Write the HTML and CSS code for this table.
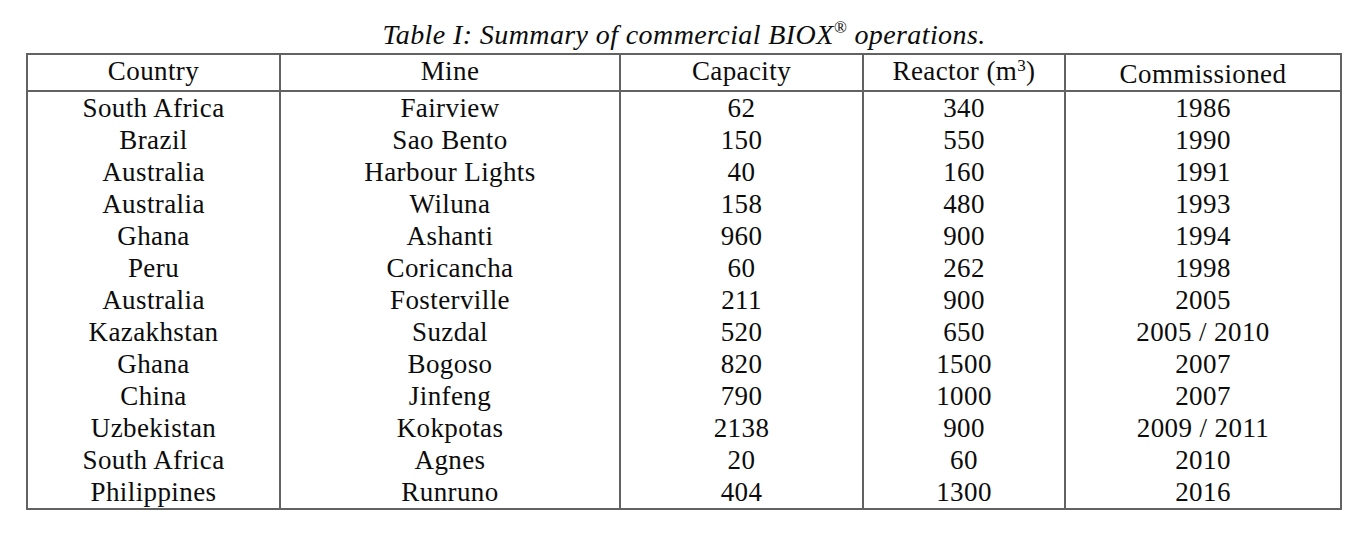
FILE: index.html
```html
<!DOCTYPE html>
<html lang="en">
<head>
<meta charset="utf-8">
<title>Summary of commercial BIOX operations</title>
<link rel="stylesheet" href="styles.css">
</head>
<body>
<table class="biox">
  <caption class="biox-caption">Table I: Summary of commercial BIOX<sup class="reg">®</sup> operations.</caption>
  <colgroup>
    <col class="c-country">
    <col class="c-mine">
    <col class="c-capacity">
    <col class="c-reactor">
    <col class="c-year">
  </colgroup>
  <thead>
    <tr class="head-row">
      <th>Country</th>
      <th>Mine</th>
      <th>Capacity</th>
      <th>Reactor (m<sup class="sup3">3</sup>)</th>
      <th class="th-low">Commissioned</th>
    </tr>
  </thead>
  <tbody>
    <tr><td>South Africa</td><td>Fairview</td><td>62</td><td>340</td><td>1986</td></tr>
    <tr><td>Brazil</td><td>Sao Bento</td><td>150</td><td>550</td><td>1990</td></tr>
    <tr><td>Australia</td><td>Harbour Lights</td><td>40</td><td>160</td><td>1991</td></tr>
    <tr><td>Australia</td><td>Wiluna</td><td>158</td><td>480</td><td>1993</td></tr>
    <tr><td>Ghana</td><td>Ashanti</td><td>960</td><td>900</td><td>1994</td></tr>
    <tr><td>Peru</td><td>Coricancha</td><td>60</td><td>262</td><td>1998</td></tr>
    <tr><td>Australia</td><td>Fosterville</td><td>211</td><td>900</td><td>2005</td></tr>
    <tr><td>Kazakhstan</td><td>Suzdal</td><td>520</td><td>650</td><td>2005 / 2010</td></tr>
    <tr><td>Ghana</td><td>Bogoso</td><td>820</td><td>1500</td><td>2007</td></tr>
    <tr><td>China</td><td>Jinfeng</td><td>790</td><td>1000</td><td>2007</td></tr>
    <tr><td>Uzbekistan</td><td>Kokpotas</td><td>2138</td><td>900</td><td>2009 / 2011</td></tr>
    <tr><td>South Africa</td><td>Agnes</td><td>20</td><td>60</td><td>2010</td></tr>
    <tr><td>Philippines</td><td>Runruno</td><td>404</td><td>1300</td><td>2016</td></tr>
  </tbody>
</table>
</body>
</html>
```

FILE: styles.css
```css
html, body {
  margin: 0;
  padding: 0;
  background: #ffffff;
}

body {
  font-family: "Liberation Serif", "Times New Roman", serif;
  color: #0c0c0c;
}

.biox {
  margin-left: 26px;
  width: 1316px;
  border-collapse: collapse;
  table-layout: fixed;
  border: 2px solid #626262;
  font-size: 27px;
  letter-spacing: 0.4px;
}

.biox-caption {
  caption-side: top;
  font-style: italic;
  font-size: 28px;
  line-height: 32px;
  padding-top: 19px;
  padding-bottom: 2px;
  text-align: center;
  letter-spacing: 0.4px;
  color: #0c0c0c;
}

.reg {
  font-size: 17px;
  line-height: 0;
  vertical-align: 11px;
}

.sup3 {
  font-size: 17px;
  line-height: 0;
  vertical-align: 9px;
}

.c-country { width: 253px; }
.c-mine { width: 340px; }
.c-capacity { width: 243px; }
.c-reactor { width: 202px; }
.c-year { width: 276px; }

.biox th,
.biox td {
  padding: 0;
  text-align: center;
  vertical-align: middle;
  border-left: 2px solid #626262;
  border-right: 2px solid #626262;
  white-space: nowrap;
  line-height: 30px;
}

.biox th {
  font-weight: normal;
  height: 31px;
  padding-bottom: 4px;
  border-bottom: 2px solid #626262;
}

.biox th.th-low {
  height: 33px;
  padding-top: 2px;
  padding-bottom: 0;
}

.biox td {
  height: 32px;
}
```
